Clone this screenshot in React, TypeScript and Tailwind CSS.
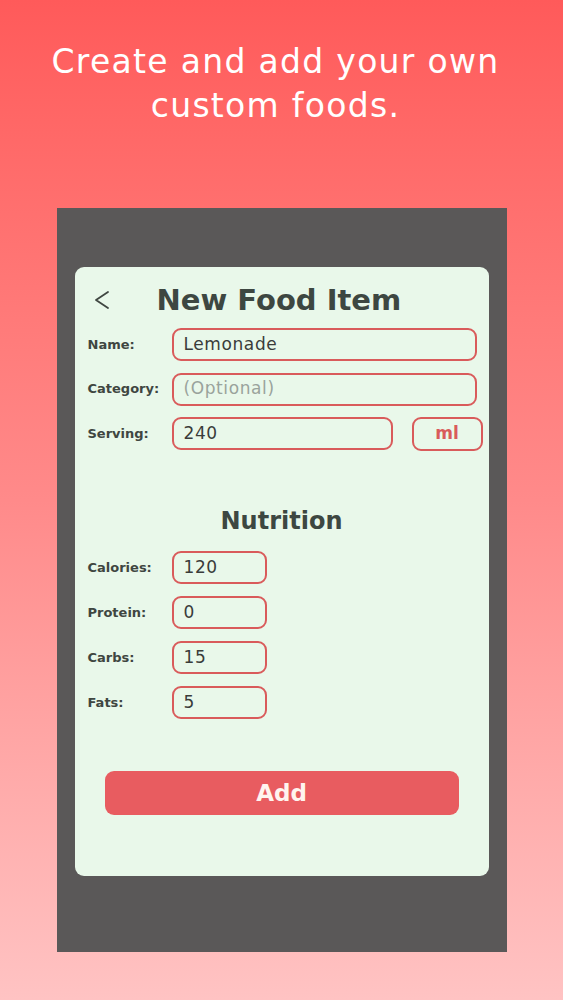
import React from "react";

const font = { fontFamily: '"DejaVu Sans", Verdana, sans-serif' };

function Row({ label, value, placeholder, width, extra }: { label: string; value?: string; placeholder?: string; width: string; extra?: React.ReactNode }) {
  return (
    <div className="flex items-center h-[33px]">
      <div className="w-[84px] text-[13px] font-bold text-[#3f4641]">{label}</div>
      <div className={`${width} h-[33px] border-2 border-[#d95b5b] rounded-[9px] flex items-center px-[10px] text-[17px] tracking-[0.6px] ${value ? "text-[#3a3c3a]" : "text-[#9aa39c]"}`}>
        {value ?? placeholder}
      </div>
      {extra}
    </div>
  );
}

export default function App() {
  return (
    <div style={font} className="w-[563px] h-[1000px] bg-gradient-to-b from-[#ff5a5a] via-[#ff8a8a] to-[#ffc3c3] flex flex-col items-center overflow-hidden">
      <div className="pt-[40px] pr-[12px] text-white text-[33px] tracking-[1.3px] leading-[44px] text-center">
        Create and add your own
        <br />
        custom foods.
      </div>
      <div className="mt-[80px] w-[450px] h-[744px] bg-[#5a5858] pt-[59px] px-[18px]">
        <div className="h-[609px] bg-[#e9f8ea] rounded-[9px] pl-[13px] pr-[6px] flex flex-col">
          <div className="flex items-center h-[32px] mt-[17px]">
            <svg width="17" height="20" viewBox="0 0 17 20" className="ml-[5px]" fill="none">
              <path d="M15 2 L3 10 L15 18" stroke="#3f4641" strokeWidth="1.8" strokeLinecap="round" strokeLinejoin="round" />
            </svg>
            <div className="ml-[47px] text-[29px] font-bold text-[#3d4741] leading-[32px]">New Food Item</div>
          </div>
          <div className="mt-[12px] flex flex-col gap-[11.5px]">
            <Row label="Name:" value="Lemonade" width="w-[305px]" />
            <Row label="Category:" placeholder="(Optional)" width="w-[305px]" />
            <Row
              label="Serving:"
              value="240"
              width="w-[221px]"
              extra={
                <div className="ml-[19px] w-[71px] h-[34px] border-2 border-[#d95b5b] rounded-[9px] flex items-center justify-center text-[17px] font-bold text-[#d95b5b]">
                  ml
                </div>
              }
            />
          </div>
          <div className="mt-[56px] text-center pr-[7px] text-[24px] font-bold text-[#3d4741] leading-[30px]">Nutrition</div>
          <div className="mt-[15px] flex flex-col gap-[12px]">
            <Row label="Calories:" value="120" width="w-[95px]" />
            <Row label="Protein:" value="0" width="w-[95px]" />
            <Row label="Carbs:" value="15" width="w-[95px]" />
            <Row label="Fats:" value="5" width="w-[95px]" />
          </div>
          <div className="mt-[52px] ml-[17px] w-[354px] h-[44px] bg-[#e85c60] rounded-[9px] flex items-center justify-center text-[23px] font-bold text-[#fff4ef]">
            Add
          </div>
        </div>
      </div>
    </div>
  );
}
